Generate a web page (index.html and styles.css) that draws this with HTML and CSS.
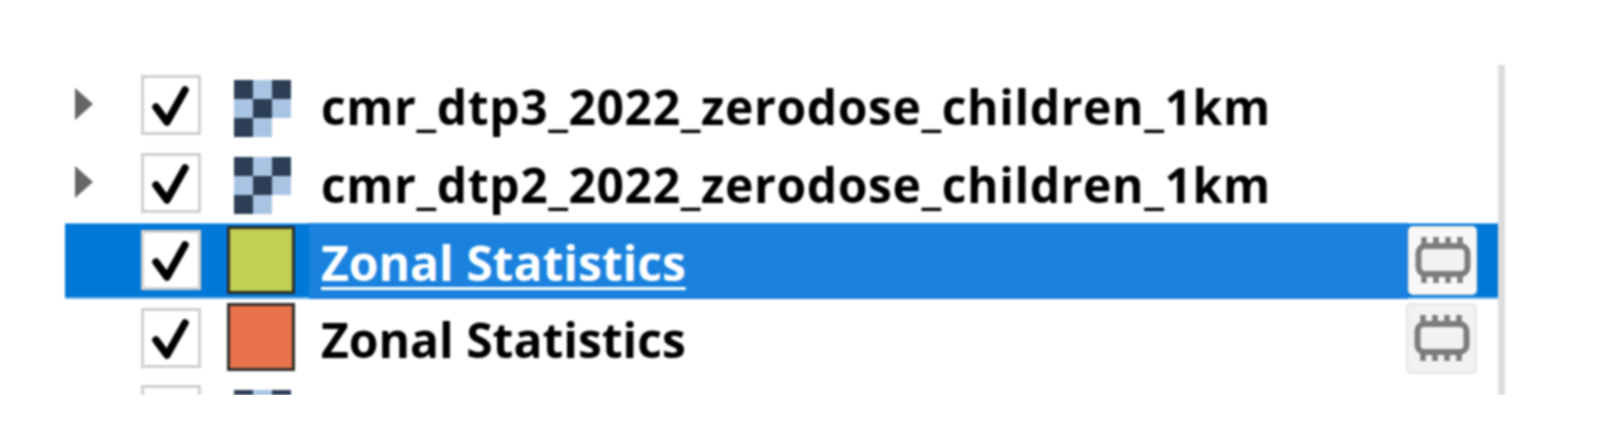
FILE: index.html
```html
<!DOCTYPE html>
<html lang="en">
<head>
    <meta charset="UTF-8">
    <meta name="viewport" content="width=device-width, initial-scale=1.0">
    <title>Layers</title>
    <link rel="stylesheet" href="styles.css">
</head>
<body>
    <svg class="defs" width="0" height="0" aria-hidden="true">
        <symbol id="tick" viewBox="0 0 60 60">
            <path d="M15 32 L26 47 L44 15" fill="none" stroke="#000" stroke-width="7.5" stroke-linecap="round" stroke-linejoin="round"/>
        </symbol>
        <symbol id="raster" viewBox="0 0 57 57">
            <rect x="0" y="0" width="57" height="19" fill="#a9c4e2"/>
            <rect x="0" y="19" width="57" height="19" fill="#a9c4e2"/>
            <rect x="0" y="38" width="38" height="19" fill="#a9c4e2"/>
            <rect x="0" y="0" width="19" height="19" fill="#2c3e55"/>
            <rect x="38" y="0" width="19" height="19" fill="#2c3e55"/>
            <rect x="19" y="19" width="19" height="19" fill="#2c3e55"/>
            <rect x="0" y="38" width="19" height="19" fill="#2c3e55"/>
        </symbol>
        <symbol id="chip" viewBox="0 0 56 48">
            <path d="M9 1v8M21 1v8M33 1v8M45 1v8M9 39v8M21 39v8M33 39v8M45 39v8" fill="none" stroke="#7c7c7c" stroke-width="5.5"/>
            <rect x="3.5" y="10" width="49" height="28" rx="7" fill="#f2f2f2" stroke="#7c7c7c" stroke-width="6"/>
        </symbol>
    </svg>

    <div class="layer-panel">
        <div class="layer-row">
            <span class="expander"></span>
            <span class="check"><svg><use href="#tick"/></svg></span>
            <span class="symbol"><svg class="raster-icon"><use href="#raster"/></svg></span>
            <span class="label long-name">cmr_dtp3_2022_zerodose_children_1km</span>
        </div>
        <div class="layer-row">
            <span class="expander"></span>
            <span class="check"><svg><use href="#tick"/></svg></span>
            <span class="symbol"><svg class="raster-icon"><use href="#raster"/></svg></span>
            <span class="label long-name">cmr_dtp2_2022_zerodose_children_1km</span>
        </div>
        <div class="layer-row selected">
            <span class="expander no-arrow"></span>
            <span class="check"><svg><use href="#tick"/></svg></span>
            <span class="symbol"><span class="swatch green"></span></span>
            <span class="label">Zonal Statistics</span>
            <span class="memory light"><svg><use href="#chip"/></svg></span>
        </div>
        <div class="layer-row">
            <span class="expander no-arrow"></span>
            <span class="check"><svg><use href="#tick"/></svg></span>
            <span class="symbol"><span class="swatch orange"></span></span>
            <span class="label">Zonal Statistics</span>
            <span class="memory wide"><svg><use href="#chip"/></svg></span>
        </div>
        <div class="layer-row">
            <span class="expander no-arrow"></span>
            <span class="check"></span>
            <span class="symbol"><svg class="raster-icon"><use href="#raster"/></svg></span>
            <span class="label"></span>
        </div>
    </div>
</body>
</html>
```

FILE: styles.css
```css
html, body { margin: 0; padding: 0; background: #fff; overflow: hidden; }
.defs { display: block; height: 0; }

.layer-panel {
    width: 1433px;
    height: 327px;
    margin: 65px 0 0 65px;
    padding-top: 3px;
    overflow: hidden;
    border-right: 7px solid #dcdcdc;
    font-family: "Open Sans", "Noto Sans", sans-serif;
    font-weight: 700;
    font-size: 48px;
    color: #000;
    filter: blur(0.9px);
}

.layer-row { display: flex; align-items: center; height: 77.5px; flex-shrink: 0; }
.layer-row.selected {
    height: 76px;
    margin-bottom: 1.5px;
    background: #0078d7;
    box-shadow: inset 0 1px 0 #6fb2ea, inset 0 -2px 0 #6fb2ea;
    color: #fff;
}

.expander { width: 76px; flex-shrink: 0; position: relative; height: 100%; }
.expander::before {
    content: "";
    position: absolute;
    left: 10px;
    top: 20px;
    border-left: 18px solid #666;
    border-top: 16px solid transparent;
    border-bottom: 16px solid transparent;
}
.expander.no-arrow::before { display: none; }

.check {
    width: 54px;
    height: 54px;
    flex-shrink: 0;
    margin-top: -3px;
    border: 3px solid #cfcfcf;
    background: #fff;
}
.check svg { display: block; width: 60px; height: 60px; margin: -3px; }
.selected .check { border-color: #d8d0cc; }

.symbol { width: 108px; flex-shrink: 0; padding-left: 26px; box-sizing: border-box; display: flex; }
.raster-icon { width: 57px; height: 57px; margin: 3px 0 0 7px; }

.swatch { width: 62px; height: 62px; border: 3px solid #2e2e2a; display: block; margin-top: -2px; }
.swatch.green { background: #c0d050; }
.swatch.orange { background: #e87249; margin-top: -5px; }

.label {
    flex: 1;
    height: 100%;
    padding: 0 0 0 12px;
    line-height: 77px;
    white-space: nowrap;
}
.long-name { letter-spacing: 0.6px; }
.selected .label {
    line-height: 79px;
    background: #1a82de;
    text-decoration: underline;
    text-decoration-thickness: 3px;
    text-underline-offset: 6px;
}

.memory {
    width: 69px;
    height: 69px;
    margin-right: 21px;
    margin-top: -2px;
    flex-shrink: 0;
    box-sizing: border-box;
    background: #f2f2f2;
    border: 2px solid #e6e6e6;
    border-radius: 5px;
    display: flex;
    align-items: center;
    justify-content: center;
}
.memory svg { width: 56px; height: 48px; }
.memory.light { background: #f8f8f8; border-color: #f4efe9; }
.memory.wide { width: 71px; height: 71px; }
```
